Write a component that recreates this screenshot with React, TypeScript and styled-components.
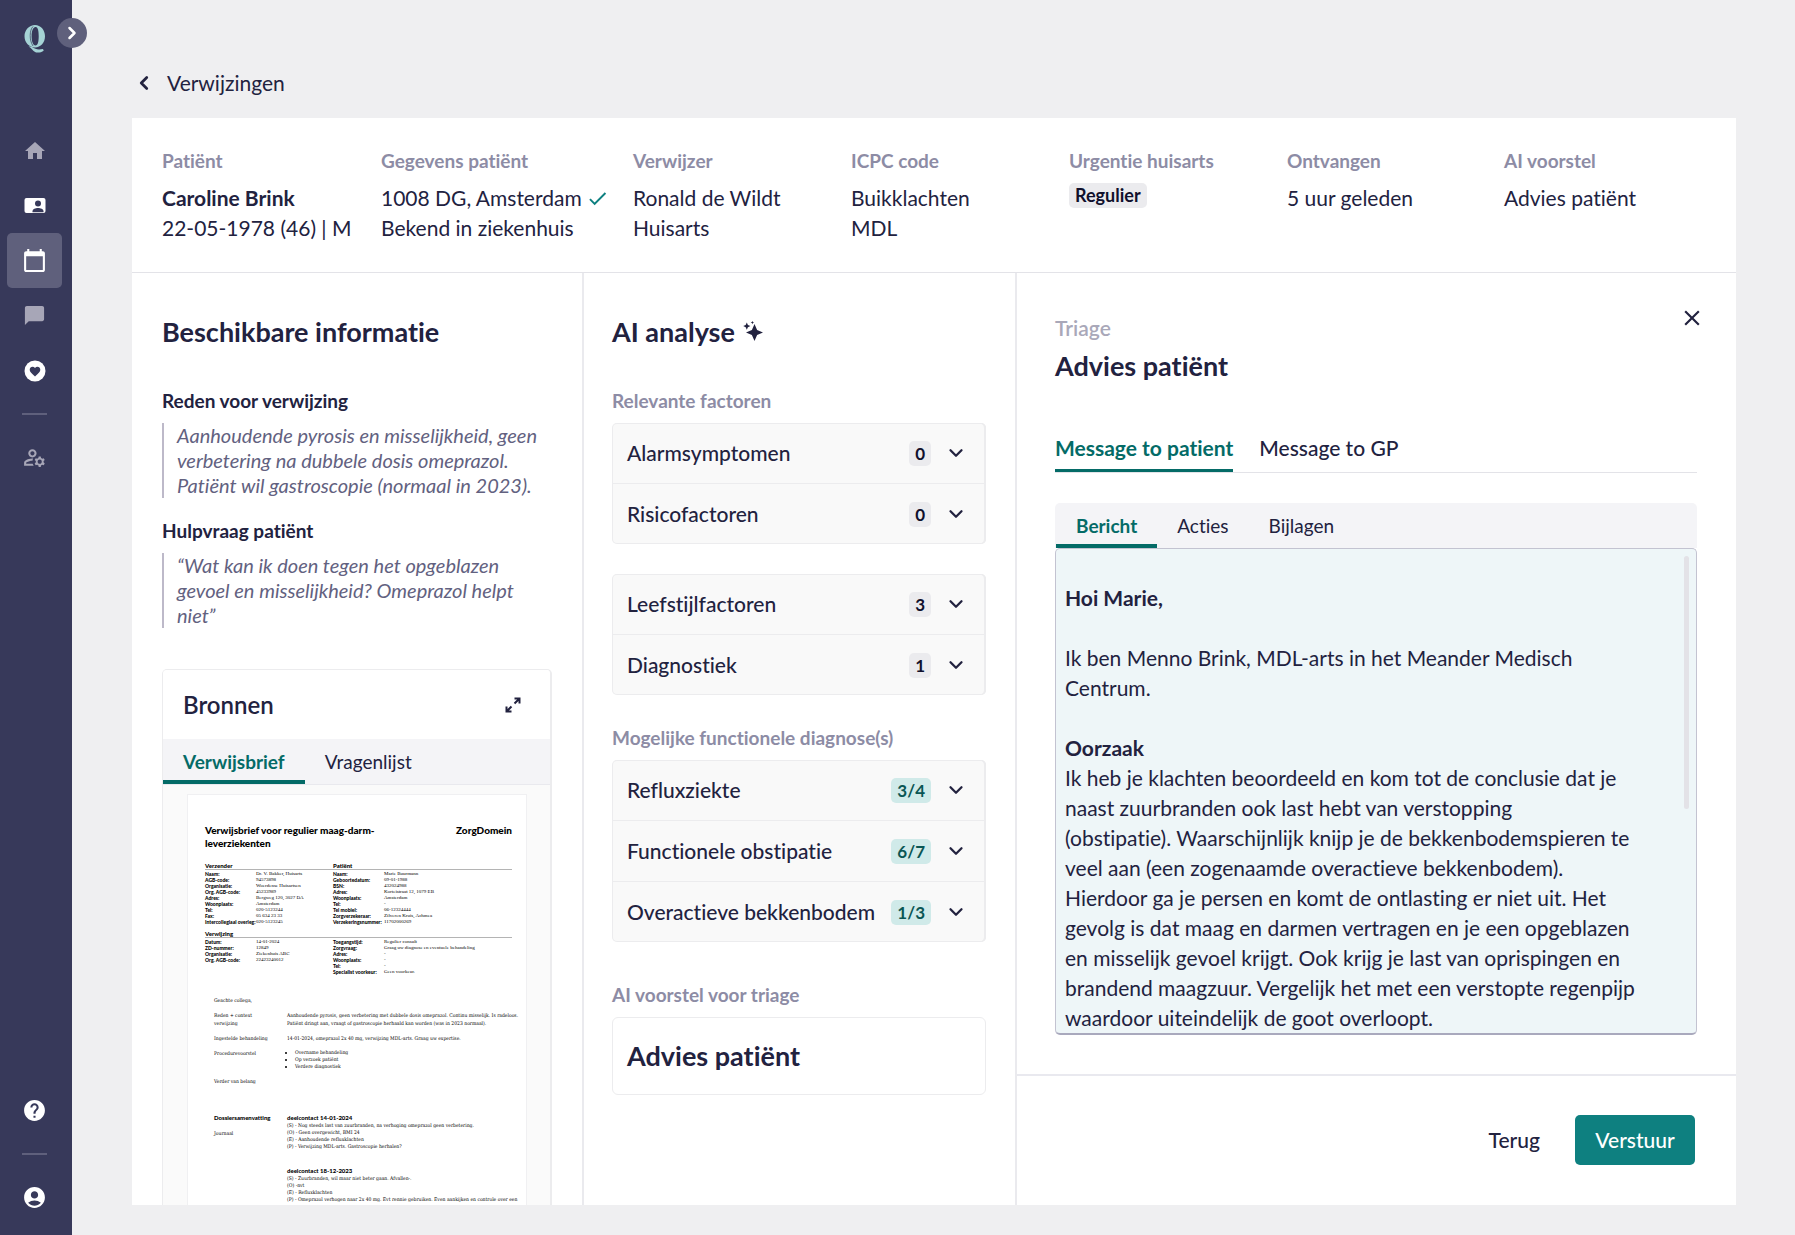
import React from "react";
import styled, { createGlobalStyle, css } from "styled-components";
import {
  MdAccountCircle,
  MdCalendarToday,
  MdCheck,
  MdChatBubble,
  MdClose,
  MdHelp,
  MdHome,
  MdOutlineManageAccounts,
} from "react-icons/md";
import { ChevronDown, ChevronLeft, ChevronRight } from "lucide-react";

const color = {
  ink: "#22223f",
  label: "#8d8ca5",
  muted: "#a9a8b9",
  quote: "#626180",
  line: "#e3e3e8",
  soft: "#ececee",
  page: "#efeff1",
  nav: "#37395a",
  navActive: "#5f607c",
  teal: "#046b67",
  button: "#0e8080",
};

const GlobalStyle = createGlobalStyle`
  *, *::before, *::after { box-sizing: border-box; }
  body {
    margin: 0;
    background: ${color.page};
    color: ${color.ink};
    font-family: Lato, "Open Sans", sans-serif;
    font-size: 21px;
    font-variant-ligatures: none;
    line-height: 30px;
  }
  h1, h2, h3, h4, p, dl, dd, dt, ul, blockquote { margin: 0; padding: 0; }
  button { border: 0; padding: 0; background: none; color: inherit; font: inherit; font-variant-ligatures: none; cursor: pointer; }
  a { color: inherit; text-decoration: none; }
  svg { display: block; flex: none; }
`;

const Shell = styled.div`
  display: flex;
  height: 100vh;
`;

/* Sidebar */

const Sidebar = styled.aside`
  position: relative;
  display: flex;
  flex: none;
  flex-direction: column;
  width: 72px;
  padding: 25px 10px 10px 7px;
  background: ${color.nav};
`;

const Logo = styled.a`
  display: flex;
  justify-content: center;
  height: 98px;
  flex: none;
`;

const NavGroup = styled.nav`
  display: flex;
  flex-direction: column;
`;

const Spacer = styled.div`
  flex: 1;
`;

const NavButton = styled.button<{ $active?: boolean; $dim?: boolean }>`
  display: flex;
  align-items: center;
  justify-content: center;
  height: 55px;
  border-radius: 5px;
  color: ${(p) => (p.$dim ? "#a7a6b7" : "#ffffff")};
  background: ${(p) => (p.$active ? color.navActive : "transparent")};
`;

const NavRule = styled.hr`
  width: 25px;
  height: 2px;
  margin: 15px auto;
  border: 0;
  background: ${color.navActive};
`;

const SidebarToggle = styled.button`
  position: absolute;
  top: 18px;
  right: -15px;
  display: flex;
  align-items: center;
  justify-content: center;
  width: 30px;
  height: 30px;
  border-radius: 50%;
  background: ${color.navActive};
  color: #ffffff;
`;

/* Page frame */

const Main = styled.main`
  display: flex;
  flex: 1;
  flex-direction: column;
  min-width: 0;
  padding: 68px 59px 30px 60px;
`;

const Back = styled.a`
  display: flex;
  align-items: center;
  gap: 12px;
  align-self: flex-start;
  padding-left: 1px;
  margin-bottom: 20px;
`;

const Card = styled.div`
  display: flex;
  flex: 1;
  flex-direction: column;
  min-height: 0;
  background: #ffffff;
`;

const Summary = styled.dl`
  display: grid;
  grid-template-columns: 219fr 252fr 218fr 218fr 218fr 217fr 232fr;
  padding: 28px 0 29px 30px;
  border-bottom: 1px solid ${color.line};
`;

const Label = styled.dt`
  margin-bottom: 7px;
  color: ${color.label};
  font-size: 19px;
  font-weight: 700;
`;

const Value = styled.dd<{ $strong?: boolean }>`
  display: flex;
  align-items: center;
  gap: 4px;
  white-space: nowrap;
  font-weight: ${(p) => (p.$strong ? 700 : 400)};
`;

const Badge = styled.span<{ $tone?: "teal"; $small?: boolean }>`
  display: inline-block;
  padding: 0 6px;
  border-radius: 5px;
  background: ${(p) => (p.$tone === "teal" ? "#d0eae9" : "#ebebee")};
  color: ${(p) => (p.$tone === "teal" ? "#0a5654" : "#10102c")};
  font-size: ${(p) => (p.$small ? 17 : 18)}px;
  font-weight: 700;
  line-height: 25px;
`;

const Columns = styled.div`
  display: grid;
  flex: 1;
  grid-template-columns: 452fr 433fr 719fr;
  grid-template-rows: minmax(0, 1fr);
  min-height: 0;
`;

const Column = styled.section`
  display: flex;
  flex-direction: column;
  min-width: 0;
  overflow: hidden;
  border-right: 2px solid #eaeaee;
  padding: 41px 29px 0 28px;

  &:first-child {
    padding-right: 30px;
    padding-left: 30px;
  }
`;

const ColumnTitle = styled.h2`
  display: flex;
  align-items: center;
  gap: 8px;
  margin-bottom: 39px;
  font-size: 27px;
  font-weight: 700;
  line-height: 36px;
`;

/* Available information */

const SmallHeading = styled.h3`
  margin-bottom: 10px;
  font-size: 19px;
  font-weight: 700;
  line-height: 24px;
`;

const Quote = styled.blockquote`
  margin-bottom: 21px;
  padding-left: 13px;
  border-left: 2px solid #bdb9c9;
  color: ${color.quote};
  font-size: 20px;
  font-style: italic;
  line-height: 25px;
  white-space: nowrap;
`;

const Sources = styled.div`
  display: flex;
  flex: 1;
  flex-direction: column;
  min-height: 0;
  margin-top: 20px;
  overflow: hidden;
  border: 1px solid ${color.soft};
  border-right-width: 2px;
  border-bottom: 0;
  border-radius: 5px 5px 0 0;
  background: #fafafa;
`;

const SourcesHead = styled.div`
  display: flex;
  flex: none;
  align-items: center;
  justify-content: space-between;
  height: 69px;
  padding: 0 29px 0 20px;
  background: #ffffff;
`;

const SourcesTitle = styled.h3`
  font-size: 24px;
  font-weight: 600;
`;

const TabStrip = styled.div`
  display: flex;
  flex: none;
  height: 46px;
  border-bottom: 1px solid #e9e9ee;
  background: #f4f4f7;
`;

const StripTab = styled.button<{ $active?: boolean }>`
  padding: 0 20px;
  border-bottom: 4px solid transparent;
  border-top: 4px solid transparent;
  font-size: 19px;
  line-height: 24px;
  ${(p) =>
    p.$active &&
    css`
      border-bottom-color: ${color.teal};
      color: ${color.teal};
      font-weight: 700;
    `}
`;

/* Letter preview */

const Letter = styled.article`
  flex: none;
  margin: 9px 23px 0 24px;
  padding: 29px 0 0 17px;
  border: 1px solid #f0f0f2;
  background: #ffffff;
  color: #000000;
  font-family: "DejaVu Serif Condensed", "DejaVu Serif", serif;
  font-size: 5px;
  line-height: 8px;
`;

const LetterHead = styled.header`
  display: flex;
  justify-content: space-between;
  margin: 0 14px 13px 0;
  color: #000000;
  font-family: Lato, sans-serif;
  font-size: 10px;
  font-weight: 900;
  line-height: 13px;
`;

const LetterSection = styled.h4`
  display: grid;
  grid-template-columns: 128fr 179fr;
  margin: 0 14px 1px 0;
  border-bottom: 1px solid #b4b4b4;
  color: #000000;
  font-family: Lato, sans-serif;
  font-size: 6px;
  font-weight: 900;
  line-height: 6px;
`;

const LetterFacts = styled.div`
  display: grid;
  grid-template-columns: 128fr 179fr;
  margin: 0 14px 6px 0;
`;

const FactList = styled.dl`
  display: grid;
  grid-template-columns: 51px 1fr;
  grid-auto-rows: 6px;
  align-content: start;
  font-family: "Liberation Serif", serif;
  line-height: 6px;
  white-space: nowrap;

  dt {
    color: #000000;
    font-family: Lato, sans-serif;
    font-weight: 900;
  }
`;

const LetterBody = styled.div`
  display: flex;
  flex-direction: column;
  gap: 7px;
  padding: 15px 0 0 9px;
`;

const LetterRow = styled.div<{ $after?: number }>`
  display: grid;
  grid-template-columns: 73px 1fr;
  margin-bottom: ${(p) => p.$after ?? 0}px;
  white-space: nowrap;
`;

const LetterStrong = styled.strong<{ $after?: number }>`
  display: block;
  margin-bottom: ${(p) => p.$after ?? 0}px;
  color: #000000;
  font-family: Lato, sans-serif;
  font-size: 6px;
  font-weight: 900;
`;

const LetterBullets = styled.ul`
  padding-left: 8px;
  line-height: 7px;
`;

const Contact = styled.div`
  margin-bottom: 17px;
`;

const ContactLine = styled.p`
  line-height: 7px;
`;

/* AI analysis */

const GroupLabel = styled.h3`
  margin-bottom: 10px;
  color: ${color.label};
  font-size: 19px;
  font-weight: 700;
  line-height: 24px;
`;

const Group = styled.div<{ $after?: number }>`
  margin-bottom: ${(p) => p.$after ?? 30}px;
  border-radius: 5px;
  background: #f9f9f9;
  box-shadow: inset 0 0 0 1px ${color.soft}, inset -2px 0 0 ${color.soft};
`;

const Factor = styled.button`
  display: flex;
  align-items: center;
  width: 100%;
  height: 60px;
  padding: 0 19px 0 15px;
  text-align: left;
  font-size: 21px;
  font-weight: 500;

  & + & {
    height: 61px;
    border-top: 1px solid ${color.soft};
  }
`;

const FactorName = styled.span`
  flex: 1;
  white-space: nowrap;
`;

const FactorIcon = styled.span`
  display: flex;
  margin-left: 14px;
`;

const Proposal = styled.div`
  padding: 20px 14px;
  border: 1px solid ${color.soft};
  border-radius: 6px;
  font-size: 27px;
  font-weight: 700;
  line-height: 36px;
`;

/* Triage */

const TriageColumn = styled.section`
  display: flex;
  flex-direction: column;
  min-width: 0;
  min-height: 0;
`;

const TriageBody = styled.div`
  display: flex;
  flex: 1;
  flex-direction: column;
  min-height: 0;
  padding: 32px 39px 39px 38px;
`;

const TriageHead = styled.header`
  display: flex;
  align-items: flex-start;
  justify-content: space-between;
  margin: 0 -8px 50px 0;
`;

const TriageTitles = styled.div`
  padding-top: 8px;
`;

const Eyebrow = styled.p`
  margin-bottom: 5px;
  color: ${color.muted};
  font-size: 21px;
  font-weight: 600;
`;

const TriageTitle = styled.h2`
  font-size: 27px;
  font-weight: 700;
  line-height: 36px;
`;

const MessageTabs = styled.div`
  display: flex;
  flex: none;
  gap: 26px;
  height: 39px;
  margin-bottom: 30px;
  border-bottom: 1px solid ${color.line};
`;

const MessageTab = styled.button<{ $active?: boolean }>`
  height: 38px;
  padding-bottom: 7px;
  border-bottom: 3px solid ${(p) => (p.$active ? color.teal : "transparent")};
  color: ${(p) => (p.$active ? color.teal : color.ink)};
  font-size: 21px;
  font-weight: ${(p) => (p.$active ? 700 : 500)};
  line-height: 28px;
`;

const EditorTabs = styled(TabStrip)`
  height: 45px;
  padding-left: 1px;
  border: 0;
  border-radius: 5px 5px 0 0;
`;

const EditorFrame = styled.div`
  position: relative;
  display: flex;
  flex: 1;
  min-height: 0;
`;

const Editor = styled.div`
  flex: 1;
  overflow: hidden;
  padding: 34px 40px 0 9px;
  border: 1px solid #c3c3d1;
  border-bottom: 2px solid #a9a9bd;
  border-radius: 5px;
  background: #eef6f8;
  outline: none;

  p + p {
    margin-top: 30px;
  }
`;

const ScrollThumb = styled.div`
  position: absolute;
  top: 8px;
  right: 8px;
  width: 5px;
  height: 52%;
  border-radius: 3px;
  background: #e3e2e7;
`;

const Footer = styled.footer`
  display: flex;
  flex: none;
  align-items: center;
  justify-content: flex-end;
  gap: 35px;
  padding: 39px 41px 40px;
  border-top: 2px solid #e9e9ef;
  font-weight: 500;
`;

const SendButton = styled.button`
  min-width: 120px;
  height: 50px;
  border-radius: 5px;
  background: ${color.button};
  color: #ffffff;
`;

function LogoMark() {
  return (
    <svg width="22" height="28" viewBox="0 0 22 28" aria-hidden="true">
      <path
        fill="#a5d3d5"
        fillRule="evenodd"
        d="M11 0C16.8 0 21 5 21 11.3S16.8 22.500 11 22.500 0.500 17.600 0.500 11.300 5.200 0 11 0ZM11.500 2C8.800 2.500 7.600 6.200 7.600 11.300S9 20.600 11.500 20.600s3.200-4.200 3.200-9.300S14 1.700 11.500 2Z"
      />
      <path
        fill="#a5d3d5"
        d="M4.500 21.500c3.500-.6 5 1.300 7 2.300 1.800.9 4.500.9 7.500.2l.7 1.700c-1.800 1.200-3.500 1.900-6 1.900-4.800 0-5.700-4.600-9.200-6.100z"
      />
      <path stroke="#37395a" strokeWidth="0.700" fill="none" d="M9 1.500C5.500 5 5 15 9 21" />
    </svg>
  );
}

function ContactCardIcon() {
  return (
    <svg width="22" height="16" viewBox="0 0 22 16" aria-hidden="true">
      <rect width="21" height="15" rx="2" x="0.500" fill="#ffffff" />
      <circle cx="14" cy="5.600" r="3" fill={color.nav} />
      <path d="M8.500 14.200v-1c0-2.300 3-3.200 5.500-3.200s5.500.9 5.500 3.200v1z" fill={color.nav} />
    </svg>
  );
}

function HeartBadgeIcon() {
  return (
    <svg width="22" height="22" viewBox="0 0 22 22" aria-hidden="true">
      <circle cx="11" cy="11" r="10.500" fill="#ffffff" />
      <path
        fill={color.nav}
        d="M11 16.500l-.8-.7C7.500 13.300 5.700 11.700 5.700 9.700 5.700 8.100 7 6.800 8.600 6.800c.9 0 1.800.4 2.400 1.100.6-.7 1.500-1.100 2.400-1.100 1.600 0 2.900 1.300 2.900 2.900 0 2-1.800 3.600-4.500 6.100z"
      />
    </svg>
  );
}

function SparkleIcon() {
  return (
    <svg width="20" height="22" viewBox="0 0 20 22" fill={color.ink} aria-hidden="true">
      <path d="M11.500 3l2.600 5.900L20 11.500l-5.900 2.600L11.500 20l-2.600-5.900L3 11.500l5.900-2.600z" />
      <path d="M3.800 1.500l1.100 2.500 2.500 1.100-2.500 1.100-1.100 2.500-1.100-2.500L.2 5.100 2.700 4z" />
      <path d="M9.400 0l.5 1.100 1.200.5-1.200.5-.5 1.200-.5-1.200-1.200-.5 1.200-.5z" />
    </svg>
  );
}

function ExpandIcon() {
  return (
    <svg width="16" height="16" viewBox="0 0 16 16" fill="none" stroke={color.ink} strokeWidth="2" aria-hidden="true">
      <path d="M9.500 1.500h5v5M14.500 1.500L9.500 6.500M6.500 14.500h-5v-5M1.500 14.500l5-5" />
    </svg>
  );
}

type FactorItem = { name: string; count: string; teal?: boolean };

function FactorGroup({ items, after }: { items: FactorItem[]; after?: number }) {
  return (
    <Group $after={after}>
      {items.map((item) => (
        <Factor key={item.name} type="button" aria-expanded={false}>
          <FactorName>{item.name}</FactorName>
          <Badge $small $tone={item.teal ? "teal" : undefined}>
            {item.count}
          </Badge>
          <FactorIcon>
            <ChevronDown size={22} strokeWidth={2.5} />
          </FactorIcon>
        </Factor>
      ))}
    </Group>
  );
}

function Facts({ rows }: { rows: [string, string][] }) {
  return (
    <FactList>
      {rows.map(([term, value]) => (
        <React.Fragment key={term}>
          <dt>{term}</dt>
          <dd>{value}</dd>
        </React.Fragment>
      ))}
    </FactList>
  );
}

function ReferralLetter() {
  return (
    <Letter>
      <LetterHead>
        <span>
          Verwijsbrief voor regulier maag-darm-
          <br />
          leverziekenten
        </span>
        <span>ZorgDomein</span>
      </LetterHead>
      <LetterSection>
        <span>Verzender</span>
        <span>Patiënt</span>
      </LetterSection>
      <LetterFacts>
        <Facts
          rows={[
            ["Naam:", "Dr. V. Bakker, Huisarts"],
            ["AGB-code:", "94573898"],
            ["Organisatie:", "Woerdense Huisartsen"],
            ["Org. AGB-code:", "45233989"],
            ["Adres:", "Bergweg 120, 3027 DA"],
            ["Woonplaats:", "Amsterdam"],
            ["Tel:", "020-5123244"],
            ["Fax:", "05 634 23 33"],
            ["Intercollegiaal overleg:", "020-5123245"],
          ]}
        />
        <Facts
          rows={[
            ["Naam:", "Marie Buurmann"],
            ["Geboortedatum:", "09-01-1988"],
            ["BSN:", "432024988"],
            ["Adres:", "Korteistraat 12, 1079 EB"],
            ["Woonplaats:", "Amsterdam"],
            ["Tel:", "-"],
            ["Tel mobiel:", "06-12324444"],
            ["Zorgverzekeraar:", "Zilveren Kruis, Achmea"],
            ["Verzekeringsnummer:", "11702000269"],
          ]}
        />
      </LetterFacts>
      <LetterSection>
        <span>Verwijzing</span>
      </LetterSection>
      <LetterFacts>
        <Facts
          rows={[
            ["Datum:", "14-01-2024"],
            ["ZD-nummer:", "12849"],
            ["Organisatie:", "Ziekenhuis ABC"],
            ["Org. AGB-code:", "22423240012"],
          ]}
        />
        <Facts
          rows={[
            ["Toegangstijd:", "Regulier consult"],
            ["Zorgvraag:", "Graag uw diagnose en eventuele behandeling"],
            ["Adres:", "-"],
            ["Woonplaats:", "-"],
            ["Tel:", "-"],
            ["Specialist voorkeur:", "Geen voorkeur."],
          ]}
        />
      </LetterFacts>
      <LetterBody>
        <LetterRow>
          <p>Geachte collega,</p>
        </LetterRow>
        <LetterRow>
          <p>
            Reden + context
            <br />
            verwijzing
          </p>
          <p>
            Aanhoudende pyrosis, geen verbetering met dubbele dosis omeprazol. Continu misselijk. Is radeloos.
            <br />
            Patiënt dringt aan, vraagt of gastroscopie herhaald kan worden (was in 2023 normaal).
          </p>
        </LetterRow>
        <LetterRow>
          <p>Ingestelde behandeling</p>
          <p>14-01-2024, omeprazol 2x 40 mg, verwijzing MDL-arts. Graag uw expertise.</p>
        </LetterRow>
        <LetterRow>
          <p>Procedurevoorstel</p>
          <LetterBullets>
            <li>Overname behandeling</li>
            <li>Op verzoek patiënt</li>
            <li>Verdere diagnostiek</li>
          </LetterBullets>
        </LetterRow>
        <LetterRow $after={22}>
          <p>Verder van belang</p>
        </LetterRow>
        <LetterRow>
          <div>
            <LetterStrong $after={7}>Dossiersamenvatting</LetterStrong>
            <p>Journaal</p>
          </div>
          <div>
            <Contact>
              <LetterStrong>deelcontact 14-01-2024</LetterStrong>
              <ContactLine>(S) - Nog steeds last van zuurbranden, na verhoging omeprazol geen verbetering.</ContactLine>
              <ContactLine>(O) - Geen overgewicht, BMI 24</ContactLine>
              <ContactLine>(E) - Aanhoudende refluxklachten</ContactLine>
              <ContactLine>(P) - Verwijzing MDL-arts. Gastroscopie herhalen?</ContactLine>
            </Contact>
            <Contact>
              <LetterStrong>deelcontact 18-12-2023</LetterStrong>
              <ContactLine>(S) - Zuurbranden, wil maar niet beter gaan. Afvallen-.</ContactLine>
              <ContactLine>(O) -nvt</ContactLine>
              <ContactLine>(E) - Refluxklachten</ContactLine>
              <ContactLine>
                (P) - Omeprazol verhogen naar 2x 40 mg. Evt rennie gebruiken. Even aankijken en controle over een
              </ContactLine>
            </Contact>
          </div>
        </LetterRow>
      </LetterBody>
    </Letter>
  );
}

export default function App() {
  return (
    <>
      <GlobalStyle />
      <Shell>
        <Sidebar>
          <Logo href="#" aria-label="Home">
            <LogoMark />
          </Logo>
          <NavGroup aria-label="Hoofdmenu">
            <NavButton type="button" $dim aria-label="Start">
              <MdHome size={24} />
            </NavButton>
            <NavButton type="button" aria-label="Patiënten">
              <ContactCardIcon />
            </NavButton>
            <NavButton type="button" $active aria-label="Agenda">
              <MdCalendarToday size={25} />
            </NavButton>
            <NavButton type="button" $dim aria-label="Berichten">
              <MdChatBubble size={23} />
            </NavButton>
            <NavButton type="button" aria-label="Gezondheid">
              <HeartBadgeIcon />
            </NavButton>
            <NavRule />
            <NavButton type="button" $dim aria-label="Beheer">
              <MdOutlineManageAccounts size={25} />
            </NavButton>
          </NavGroup>
          <Spacer />
          <NavGroup aria-label="Account">
            <NavButton type="button" aria-label="Help">
              <MdHelp size={25} />
            </NavButton>
            <NavRule />
            <NavButton type="button" aria-label="Profiel">
              <MdAccountCircle size={25} />
            </NavButton>
          </NavGroup>
          <SidebarToggle type="button" aria-label="Menu uitklappen">
            <ChevronRight size={20} strokeWidth={3} />
          </SidebarToggle>
        </Sidebar>

        <Main>
          <Back href="#">
            <ChevronLeft size={22} strokeWidth={3} />
            Verwijzingen
          </Back>
          <Card>
            <Summary>
              <div>
                <Label>Patiënt</Label>
                <Value $strong>Caroline Brink</Value>
                <Value>22-05-1978 (46) | M</Value>
              </div>
              <div>
                <Label>Gegevens patiënt</Label>
                <Value>
                  1008 DG, Amsterdam
                  <MdCheck size={23} color={color.button} />
                </Value>
                <Value>Bekend in ziekenhuis</Value>
              </div>
              <div>
                <Label>Verwijzer</Label>
                <Value>Ronald de Wildt</Value>
                <Value>Huisarts</Value>
              </div>
              <div>
                <Label>ICPC code</Label>
                <Value>Buikklachten</Value>
                <Value>MDL</Value>
              </div>
              <div>
                <Label>Urgentie huisarts</Label>
                <Value>
                  <Badge>Regulier</Badge>
                </Value>
              </div>
              <div>
                <Label>Ontvangen</Label>
                <Value>5 uur geleden</Value>
              </div>
              <div>
                <Label>AI voorstel</Label>
                <Value>Advies patiënt</Value>
              </div>
            </Summary>

            <Columns>
              <Column>
                <ColumnTitle>Beschikbare informatie</ColumnTitle>
                <SmallHeading>Reden voor verwijzing</SmallHeading>
                <Quote>
                  Aanhoudende pyrosis en misselijkheid, geen
                  <br />
                  verbetering na dubbele dosis omeprazol.
                  <br />
                  Patiënt wil gastroscopie (normaal in 2023).
                </Quote>
                <SmallHeading>Hulpvraag patiënt</SmallHeading>
                <Quote>
                  “Wat kan ik doen tegen het opgeblazen
                  <br />
                  gevoel en misselijkheid? Omeprazol helpt
                  <br />
                  niet”
                </Quote>
                <Sources>
                  <SourcesHead>
                    <SourcesTitle>Bronnen</SourcesTitle>
                    <button type="button" aria-label="Vergroten">
                      <ExpandIcon />
                    </button>
                  </SourcesHead>
                  <TabStrip role="tablist">
                    <StripTab type="button" role="tab" aria-selected $active>
                      Verwijsbrief
                    </StripTab>
                    <StripTab type="button" role="tab" aria-selected={false}>
                      Vragenlijst
                    </StripTab>
                  </TabStrip>
                  <ReferralLetter />
                </Sources>
              </Column>

              <Column>
                <ColumnTitle>
                  AI analyse
                  <SparkleIcon />
                </ColumnTitle>
                <GroupLabel>Relevante factoren</GroupLabel>
                <FactorGroup
                  items={[
                    { name: "Alarmsymptomen", count: "0" },
                    { name: "Risicofactoren", count: "0" },
                  ]}
                />
                <FactorGroup
                  after={31}
                  items={[
                    { name: "Leefstijlfactoren", count: "3" },
                    { name: "Diagnostiek", count: "1" },
                  ]}
                />
                <GroupLabel>Mogelijke functionele diagnose(s)</GroupLabel>
                <FactorGroup
                  after={41}
                  items={[
                    { name: "Refluxziekte", count: "3/4", teal: true },
                    { name: "Functionele obstipatie", count: "6/7", teal: true },
                    { name: "Overactieve bekkenbodem", count: "1/3", teal: true },
                  ]}
                />
                <GroupLabel>AI voorstel voor triage</GroupLabel>
                <Proposal>Advies patiënt</Proposal>
              </Column>

              <TriageColumn>
                <TriageBody>
                  <TriageHead>
                    <TriageTitles>
                      <Eyebrow>Triage</Eyebrow>
                      <TriageTitle>Advies patiënt</TriageTitle>
                    </TriageTitles>
                    <button type="button" aria-label="Sluiten">
                      <MdClose size={26} />
                    </button>
                  </TriageHead>
                  <MessageTabs role="tablist">
                    <MessageTab type="button" role="tab" aria-selected $active>
                      Message to patient
                    </MessageTab>
                    <MessageTab type="button" role="tab" aria-selected={false}>
                      Message to GP
                    </MessageTab>
                  </MessageTabs>
                  <EditorTabs role="tablist">
                    <StripTab type="button" role="tab" aria-selected $active>
                      Bericht
                    </StripTab>
                    <StripTab type="button" role="tab" aria-selected={false}>
                      Acties
                    </StripTab>
                    <StripTab type="button" role="tab" aria-selected={false}>
                      Bijlagen
                    </StripTab>
                  </EditorTabs>
                  <EditorFrame>
                    <Editor
                      role="textbox"
                      aria-multiline
                      aria-label="Bericht"
                      contentEditable
                      suppressContentEditableWarning
                      spellCheck={false}
                    >
                      <p>
                        <strong>Hoi Marie,</strong>
                      </p>
                      <p>
                        Ik ben Menno Brink, MDL-arts in het Meander Medisch
                        <br />
                        Centrum.
                      </p>
                      <p>
                        <strong>Oorzaak</strong>
                        <br />
                        Ik heb je klachten beoordeeld en kom tot de conclusie dat je
                        <br />
                        naast zuurbranden ook last hebt van verstopping
                        <br />
                        (obstipatie). Waarschijnlijk knijp je de bekkenbodemspieren te
                        <br />
                        veel aan (een zogenaamde overactieve bekkenbodem).
                        <br />
                        Hierdoor ga je persen en komt de ontlasting er niet uit. Het
                        <br />
                        gevolg is dat maag en darmen vertragen en je een opgeblazen
                        <br />
                        en misselijk gevoel krijgt. Ook krijg je last van oprispingen en
                        <br />
                        brandend maagzuur. Vergelijk het met een verstopte regenpijp
                        <br />
                        waardoor uiteindelijk de goot overloopt.
                      </p>
                    </Editor>
                    <ScrollThumb />
                  </EditorFrame>
                </TriageBody>
                <Footer>
                  <button type="button">Terug</button>
                  <SendButton type="button">Verstuur</SendButton>
                </Footer>
              </TriageColumn>
            </Columns>
          </Card>
        </Main>
      </Shell>
    </>
  );
}
